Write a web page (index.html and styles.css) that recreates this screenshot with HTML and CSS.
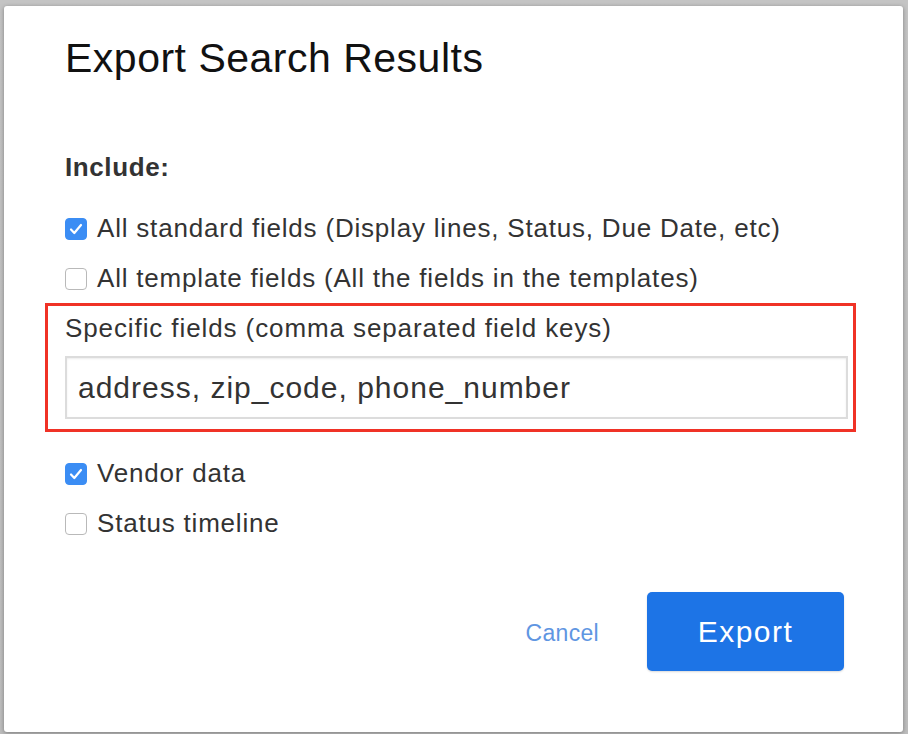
FILE: index.html
```html
<!DOCTYPE html>
<html>
<head>
<meta charset="utf-8">
<link rel="stylesheet" href="styles.css">
</head>
<body>
<div class="modal">
  <h1 class="title">Export Search Results</h1>
  <div class="section-label">Include:</div>
  <div class="options">
    <label class="check-row">
      <span class="box checked"><svg viewBox="0 0 22 22" width="22" height="22"><path d="M6 11.5l3.3 3.5L16 7" fill="none" stroke="#fff" stroke-width="2.2" stroke-linecap="round" stroke-linejoin="round"/></svg></span>
      <span>All standard fields (Display lines, Status, Due Date, etc)</span>
    </label>
    <label class="check-row">
      <span class="box"></span>
      <span>All template fields (All the fields in the templates)</span>
    </label>
    <div class="specific">
      <div class="specific-label">Specific fields (comma separated field keys)</div>
      <div class="text-input">address, zip_code, phone_number</div>
    </div>
    <label class="check-row">
      <span class="box checked"><svg viewBox="0 0 22 22" width="22" height="22"><path d="M6 11.5l3.3 3.5L16 7" fill="none" stroke="#fff" stroke-width="2.2" stroke-linecap="round" stroke-linejoin="round"/></svg></span>
      <span>Vendor data</span>
    </label>
    <label class="check-row">
      <span class="box"></span>
      <span>Status timeline</span>
    </label>
  </div>
  <div class="actions">
    <a class="cancel">Cancel</a>
    <button class="export">Export</button>
  </div>
</div>
</body>
</html>
```

FILE: styles.css
```css
html, body {
  margin: 0;
  padding: 0;
}
body {
  width: 908px;
  height: 734px;
  background: linear-gradient(#c4c4c4, #bdbdbd);
  font-family: "Liberation Sans", Arial, Helvetica, sans-serif;
  color: #333;
  overflow: hidden;
  padding: 6px 5px 2px 4px;
  box-sizing: border-box;
}
.modal {
  background: #fff;
  height: 726px;
  box-sizing: border-box;
  border-radius: 3px;
  box-shadow: 0 1px 4px rgba(0,0,0,0.35);
  padding: 29px 59px 0 61px;
}
.title {
  margin: 0;
  font-size: 41px;
  line-height: 46px;
  font-weight: normal;
  color: #111;
  letter-spacing: 0.5px;
}
.section-label {
  margin-top: 71px;
  font-size: 26px;
  line-height: 30px;
  font-weight: bold;
  color: #333;
  letter-spacing: 0.6px;
}
.options {
  display: flex;
  flex-direction: column;
  margin-top: 21px;
}
.check-row {
  display: flex;
  align-items: center;
  gap: 10px;
  height: 50px;
  font-size: 26px;
  letter-spacing: 0.8px;
}
.box {
  width: 22px;
  height: 22px;
  box-sizing: border-box;
  border: 1px solid #b9b9b9;
  border-radius: 4px;
  background: #fff;
  flex: none;
  display: flex;
  position: relative;
  top: 1px;
}
.box.checked {
  background: #3b8df4;
  border-color: #3b8df4;
}
.box svg {
  margin: -1px;
}
.specific {
  margin: 0 -12px 16px -20px;
  border: 3px solid #f03226;
  padding: 6px 5px 10px 17px;
}
.specific-label {
  font-size: 26px;
  line-height: 32px;
  letter-spacing: 0.9px;
}
.text-input {
  margin-top: 12px;
  height: 63px;
  box-sizing: border-box;
  border: 2px solid #dcdcdc;
  box-shadow: inset 0 1px 2px rgba(0,0,0,0.08);
  font-size: 30px;
  line-height: 59px;
  letter-spacing: 1px;
  padding-left: 11px;
  color: #333;
}
.actions {
  display: flex;
  justify-content: flex-end;
  align-items: center;
  gap: 48px;
  margin-top: 44px;
}
.cancel {
  color: #5f96e2;
  font-size: 23px;
  letter-spacing: 0.3px;
  position: relative;
  top: 2px;
}
.export {
  width: 197px;
  height: 79px;
  border: none;
  border-radius: 5px;
  background: #1d74e6;
  color: #fff;
  font-family: "Liberation Sans", Arial, sans-serif;
  font-size: 30px;
  letter-spacing: 1.5px;
  box-shadow: 0 1px 2px rgba(0,0,0,0.15);
}
```
